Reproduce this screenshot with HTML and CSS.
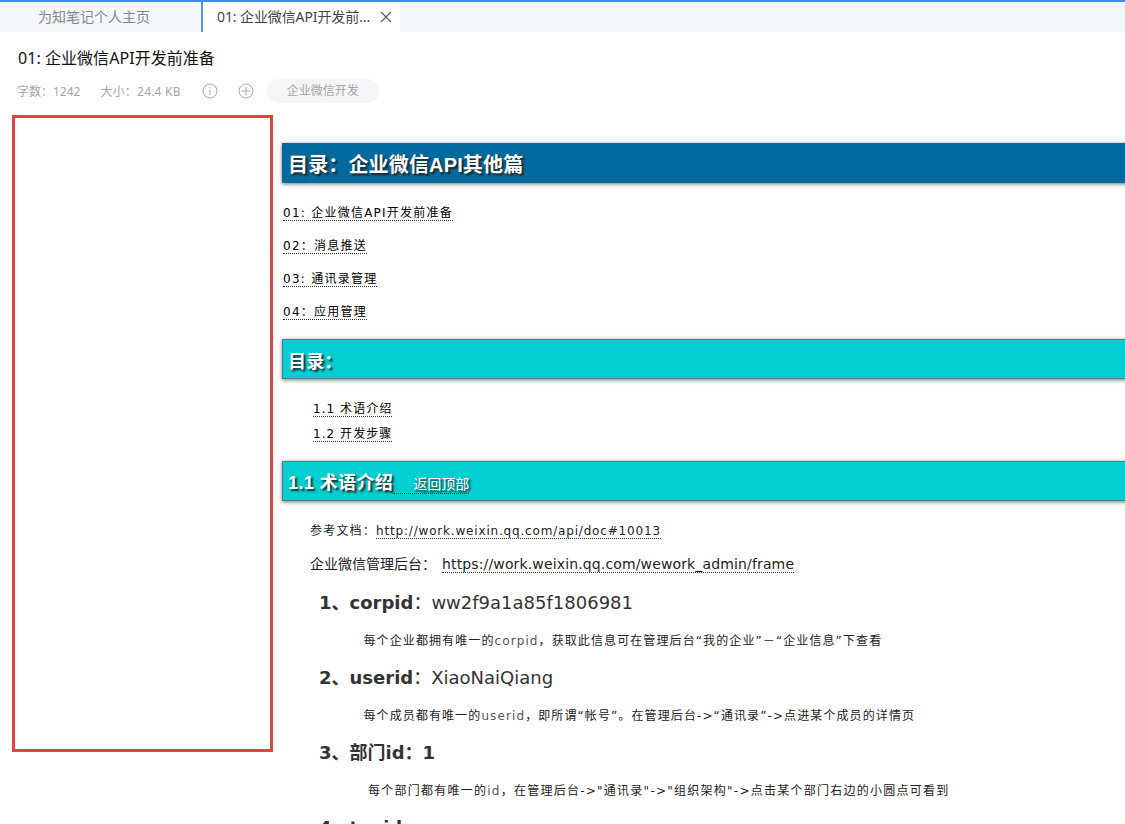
FILE: index.html
```html
<!DOCTYPE html>
<html lang="zh">
<head>
<meta charset="utf-8">
<title>01: 企业微信API开发前准备</title>
<link rel="stylesheet" href="styles.css">
</head>
<body>
<div class="app">
  <nav class="tabs">
    <div class="tab">为知笔记个人主页</div>
    <div class="tab tab-active">
      <span class="tab-label">01: 企业微信API开发前...</span>
      <svg class="tab-close" width="12" height="12" viewBox="0 0 12 12"><path d="M1 1l10 10M11 1L1 11" stroke="#555" stroke-width="1.1" fill="none"/></svg>
    </div>
  </nav>
  <header class="doc-head">
    <h1 class="doc-title">01: 企业微信API开发前准备</h1>
    <div class="meta">
      <span class="meta-item">字数：1242</span>
      <span class="meta-item meta-size">大小：24.4 KB</span>
      <svg class="meta-icon" width="16" height="16" viewBox="0 0 16 16"><circle cx="8" cy="8" r="7" stroke="#a9a9a9" fill="none"/><path d="M8 7v5M8 4v1.4" stroke="#a9a9a9" fill="none"/></svg>
      <svg class="meta-icon meta-icon-add" width="16" height="16" viewBox="0 0 16 16"><circle cx="8" cy="8" r="7" stroke="#a9a9a9" fill="none"/><path d="M8 3.5v9M3.5 8h9" stroke="#a9a9a9" fill="none"/></svg>
      <span class="tag">企业微信开发</span>
    </div>
  </header>
  <main class="body-row">
    <aside class="red-box"></aside>
    <article class="post">
      <h2 class="banner banner-blue">目录：企业微信API其他篇</h2>
      <ul class="series">
        <li><a>01: 企业微信API开发前准备</a></li>
        <li><a>02：消息推送</a></li>
        <li><a>03: 通讯录管理</a></li>
        <li><a>04：应用管理</a></li>
      </ul>
      <h2 class="banner banner-teal">目录：</h2>
      <ul class="toc">
        <li><a>1.1 术语介绍</a></li>
        <li><a>1.2 开发步骤</a></li>
      </ul>
      <h2 class="banner banner-teal banner-section">1.1 术语介绍<a class="top-link">返回顶部</a></h2>
      <p class="ref">参考文档：<a>http://work.weixin.qq.com/api/doc#10013</a></p>
      <p class="ref ref-large">企业微信管理后台：<a>https://work.weixin.qq.com/wework_admin/frame</a></p>
      <h3 class="term"><b>1、corpid</b>：ww2f9a1a85f1806981</h3>
      <p class="desc">每个企业都拥有唯一的<span class="latin">corpid</span>，获取此信息可在管理后台“我的企业”－“企业信息”下查看</p>
      <h3 class="term"><b>2、userid</b>：XiaoNaiQiang</h3>
      <p class="desc">每个成员都有唯一的<span class="latin">userid</span>，即所谓“帐号”。在管理后台->“通讯录”->点进某个成员的详情页</p>
      <h3 class="term"><b>3、<span class="serif">部门</span>id：1</b></h3>
      <p class="desc desc-shift">每个部门都有唯一的<span class="latin">id</span>，在管理后台->"通讯录"->"组织架构"->点击某个部门右边的小圆点可看到</p>
      <h3 class="term"><b>4、tagid</b></h3>
    </article>
  </main>
</div>
</body>
</html>
```
FILE: styles.css
```css
* { box-sizing: border-box; }
html, body { margin: 0; padding: 0; background: #fff; }
body { font-family: "DejaVu Sans", "Noto Sans CJK SC", sans-serif; color: #000; }
.app { width: 1125px; height: 824px; overflow: hidden; }

.tabs { display: flex; height: 32px; background: #f3f6fb; border-top: 2px solid #3c8cf0; font-family: "Noto Sans", "Noto Sans CJK SC", sans-serif; }
.tab { width: 203px; padding-left: 38px; font-size: 14px; line-height: 30px; color: #888; border-right: 2px solid #5b93e2; }
.tab-active { display: flex; align-items: center; width: 197px; padding: 0 0 0 14px; background: #fff; color: #444; border-right: 0; }
.tab-label { white-space: nowrap; letter-spacing: -.1px; }
.tab-close { margin-left: 10px; flex: none; }

.doc-head { height: 83px; padding: 15px 0 0 18px; font-family: "Noto Sans", "Noto Sans CJK SC", sans-serif; }
.doc-title { margin: 0; font-size: 16px; line-height: 22px; font-weight: 400; color: #111; letter-spacing: .05px; }
.meta { display: flex; align-items: center; height: 24px; margin: 10px 0 0 -1px; font-size: 12px; color: #a5a5a5; }
.meta-size { margin-left: 20px; letter-spacing: .2px; }
.meta-icon { margin-left: 21px; flex: none; }
.meta-icon-add { margin-left: 20px; }
.tag { margin-left: 13px; padding: 0 20px; height: 24px; line-height: 24px; border-radius: 12px; background: #f3f5f7; color: #a5a5a5; }

.body-row { display: flex; align-items: flex-start; padding-left: 12px; }
.red-box { flex: none; width: 261px; height: 637px; border: 3px solid #ee3f3f; }
.post { flex: none; width: 850px; margin-left: 9px; padding-top: 28px; font-size: 12px; }

.banner { margin: 0; height: 40px; padding-left: 6px; font-family: "Liberation Sans", "Noto Sans CJK SC", sans-serif; font-size: 20px; line-height: 45px; font-weight: 700; color: #fff; text-shadow: 2px 2px 2px #222; box-shadow: 0 1px 4px rgba(0,0,0,.55); white-space: nowrap; letter-spacing: .15px; }
.banner-blue { background: #006a9e; }
.banner-teal { background: #00ced1; border: 1px solid #4d7f80; height: 40px; line-height: 44px; padding-left: 5px; font-size: 18px; }
.banner-section { line-height: 42px; letter-spacing: .4px; }
.top-link { padding: 0 0 1px 20px; font-size: 14px; font-weight: 400; color: #fff; border-bottom: 1px dotted #333; letter-spacing: 0; }

a { color: #000; border-bottom: 1px dotted #333; }
ul { list-style: none; margin: 0; padding: 0; }
.series { padding: 14px 0 10px 1px; letter-spacing: 1.25px; }
.series li { height: 33px; line-height: 33px; }
.toc { padding: 18px 0 14px 31px; letter-spacing: 1.05px; }
.toc li { height: 25px; line-height: 25px; }

.ref { margin: 0 0 0 28px; line-height: 22px; padding-top: 19px; color: #222; white-space: nowrap; height: 41px; letter-spacing: 1.2px; }
.ref a { letter-spacing: .82px; color: #222; }
.ref-large { font-size: 14px; padding-top: 11px; height: 41px; letter-spacing: 0; }
.ref-large a { margin-left: 6px; letter-spacing: .14px; }
.term { margin: 0 0 0 37px; height: 37px; padding-top: 9px; line-height: 22px; font-size: 18px; font-weight: 400; color: #333; white-space: nowrap; }
.term b { font-weight: 700; }
.serif { font-family: "Liberation Serif", "Noto Sans CJK SC", serif; }
.desc { margin: 0 0 0 81.5px; height: 38px; line-height: 42px; color: #222; white-space: nowrap; letter-spacing: 1.1px; }
.latin { color: #555; }
.desc-shift { margin-left: 86px; letter-spacing: 1.25px; }
```
